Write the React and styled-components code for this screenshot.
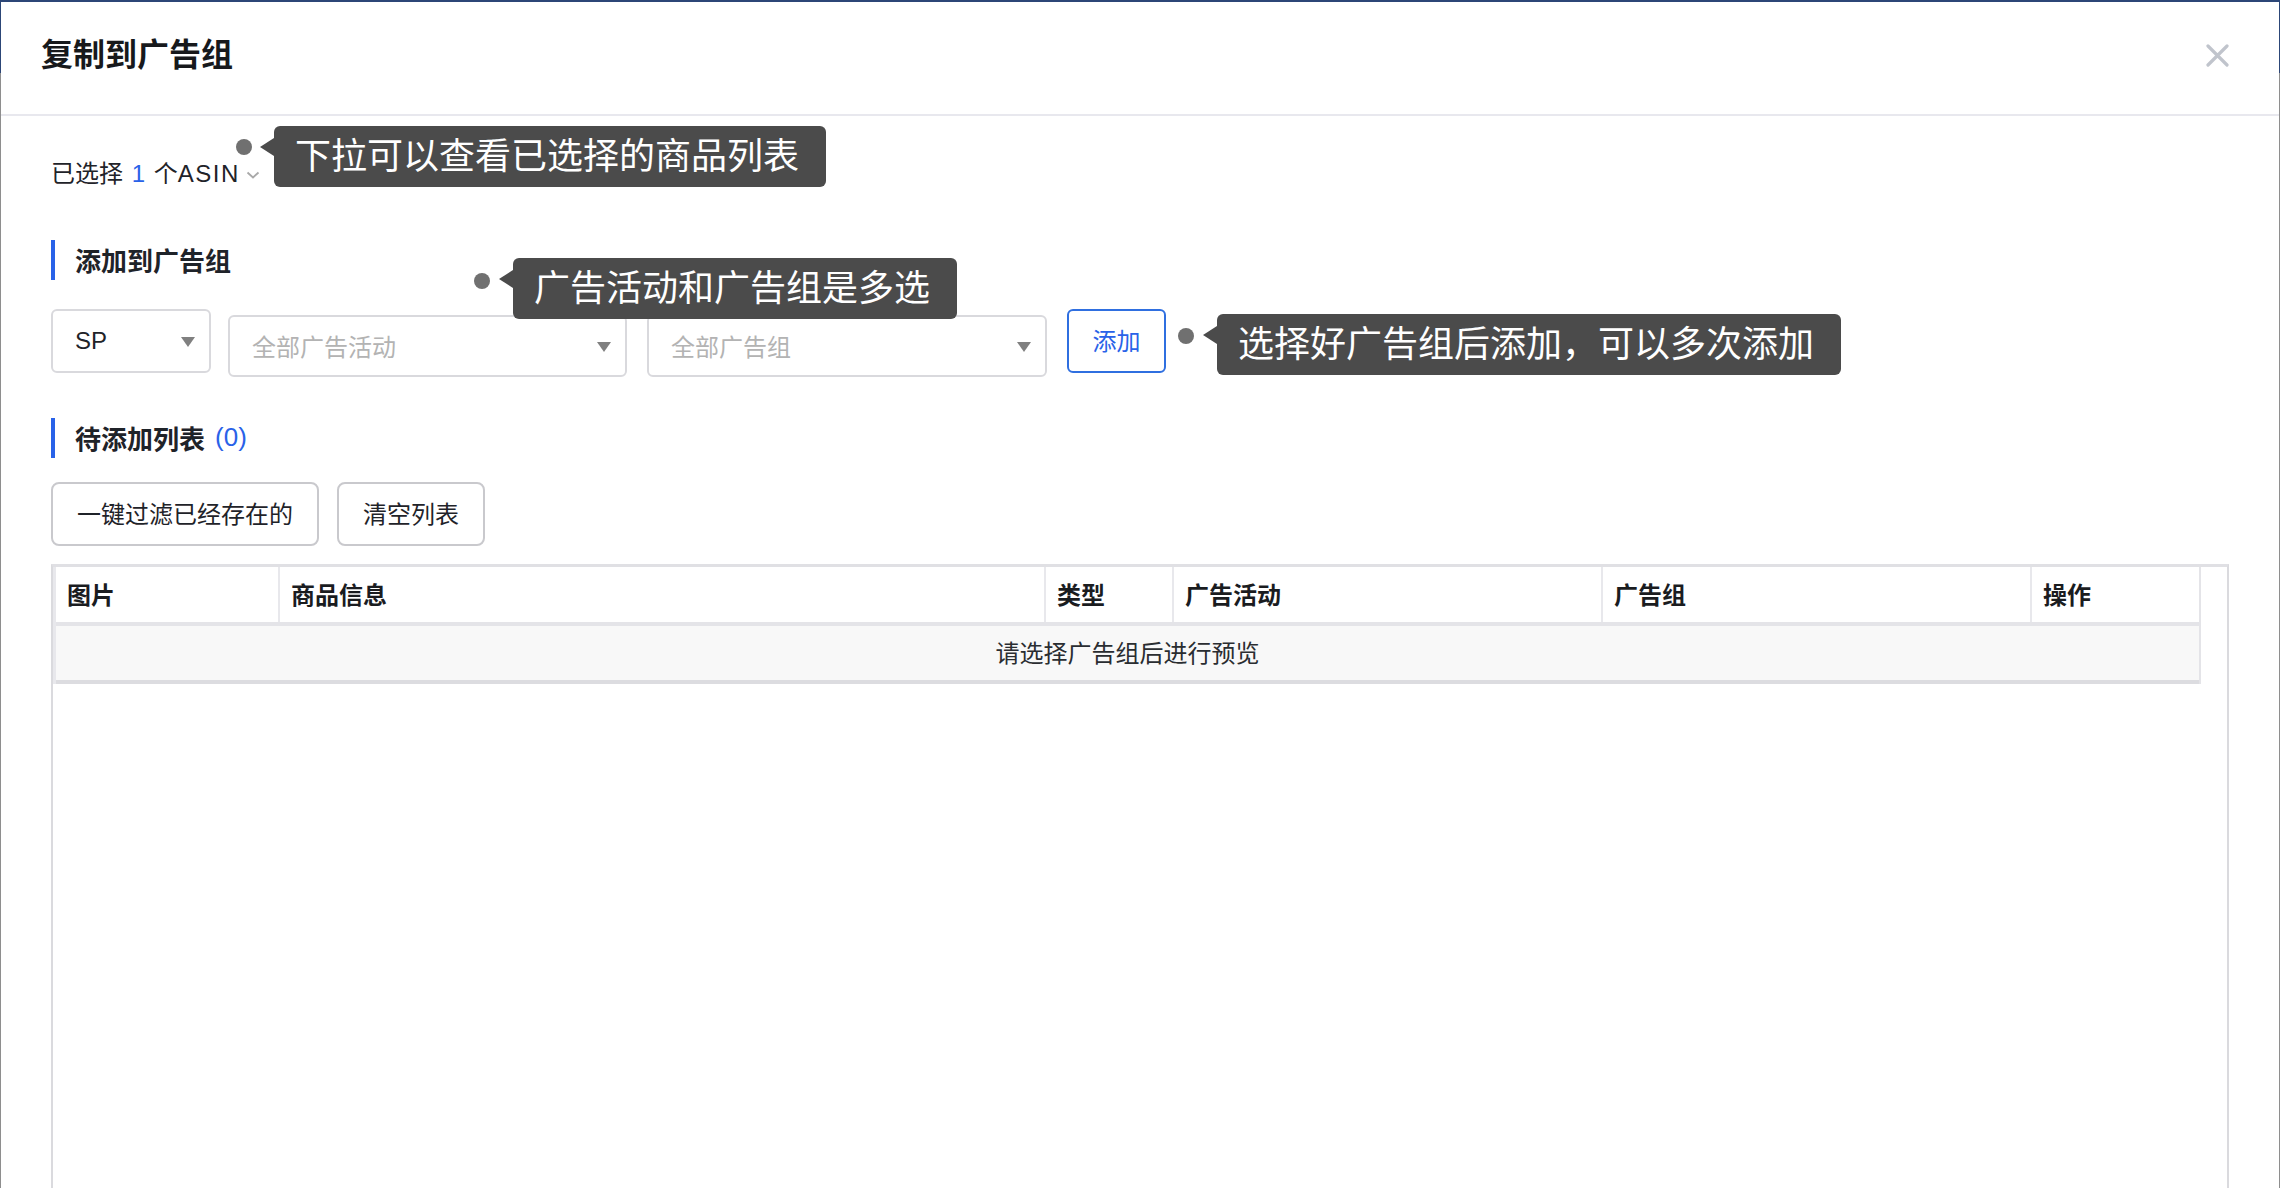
import React from "react";
import styled, { createGlobalStyle } from "styled-components";

const GlobalStyle = createGlobalStyle`
  html, body { margin: 0; padding: 0; }
  body {
    font-family: "Liberation Sans", "Noto Sans CJK SC", "Noto Sans", sans-serif;
    background: #ffffff;
    color: #1f2329;
  }
  * { box-sizing: border-box; }
`;

const BLUE = "#2962e8";

const Page = styled.div`
  width: 2280px;
  height: 1188px;
  overflow: hidden;
  padding: 2px 1px 0 1px;
  background: linear-gradient(to bottom, #2c4677 0, #2c4677 73px, #8e8e8e 73px);
`;

const Dialog = styled.div`
  position: relative;
  width: 100%;
  height: 1186px;
  background: #ffffff;
  overflow: hidden;
`;

const Header = styled.div`
  height: 114px;
  display: flex;
  align-items: center;
  justify-content: space-between;
  padding: 0 50px 6px 40px;
  border-bottom: 2px solid #e8e8ee;
`;

const Title = styled.h1`
  margin: 0;
  font-size: 32px;
  font-weight: 700;
  color: #17191c;
  line-height: 40px;
`;

const CloseButton = styled.button`
  width: 24px;
  height: 24px;
  padding: 0;
  border: none;
  background: transparent;
  display: flex;
  align-items: center;
  justify-content: center;
  cursor: pointer;
`;

const Body = styled.div`
  padding: 41px 50px 0 50px;
`;

const SelectedRow = styled.div`
  display: flex;
  align-items: center;
  height: 34px;
  font-size: 24px;
  line-height: 34px;
  color: #1f2329;
  white-space: pre;
`;

const BlueNum = styled.span`
  color: ${BLUE};
  margin: 0 2px;
`;

const Latin = styled.span`
  letter-spacing: 1.5px;
`;

const Chevron = styled.span`
  display: inline-flex;
  margin-left: 6px;
  margin-top: 2px;
`;

const SectionTitle = styled.div`
  display: flex;
  align-items: center;
  height: 40px;
  margin-top: ${(p) => p.$top}px;
  border-left: 4px solid ${BLUE};
  padding-left: 20px;
  padding-bottom: 2px;
  font-size: 26px;
  font-weight: 700;
  color: #1f2329;
`;

const Count = styled.span`
  margin-left: 10px;
  font-weight: 400;
  color: ${BLUE};
`;

const FilterRow = styled.div`
  display: flex;
  align-items: flex-start;
  margin-top: 29px;
  height: 68px;
`;

const Select = styled.div`
  display: flex;
  align-items: center;
  justify-content: space-between;
  width: ${(p) => p.$w}px;
  height: ${(p) => p.$h}px;
  margin-top: ${(p) => p.$top || 0}px;
  margin-right: ${(p) => p.$gap}px;
  padding: 0 14px 1px 22px;
  border: 2px solid #d9d9dd;
  border-radius: 6px;
  background: #fff;
  font-size: 24px;
  color: ${(p) => (p.$placeholder ? "#b3b3b3" : "#1f2329")};
`;

const Caret = styled.span`
  width: 0;
  height: 0;
  margin-top: 2px;
  border-left: 7px solid transparent;
  border-right: 7px solid transparent;
  border-top: 10px solid #808080;
`;

const PrimaryOutline = styled.button`
  width: 99px;
  height: 64px;
  border: 2px solid #2f6fe0;
  border-radius: 6px;
  background: #fff;
  color: ${BLUE};
  font-family: inherit;
  font-size: 24px;
  padding: 0 0 3px;
  cursor: pointer;
`;

const ButtonRow = styled.div`
  display: flex;
  gap: 18px;
  margin-top: 24px;
`;

const PlainButton = styled.button`
  height: 64px;
  padding: 0 24px 3px;
  border: 2px solid #c9c9cd;
  border-radius: 8px;
  background: #fff;
  color: #1f2329;
  font-family: inherit;
  font-size: 24px;
  cursor: pointer;
`;

const TableFrame = styled.div`
  margin-top: 18px;
  height: 700px;
  border-left: 2px solid #dadade;
  border-right: 2px solid #dadade;
  border-top: 3px solid #e0e0e4;
  padding-right: 26px;
`;

const Table = styled.div`
  border-left: 3px solid #e8e8ec;
  border-right: 2px solid #e4e4e8;
`;

const HeaderRow = styled.div`
  display: grid;
  grid-template-columns: 222px 766px 128px 429px 429px 1fr;
  height: 59px;
  border-bottom: 4px solid #e4e4e8;
  background: #fff;
`;

const HeadCell = styled.div`
  display: flex;
  align-items: center;
  padding: 0 0 2px 11px;
  border-left: ${(p) => (p.$first ? "none" : "2px solid #e8e8ec")};
  font-size: 24px;
  font-weight: 700;
  color: #1a1c1f;
`;

const EmptyRow = styled.div`
  display: flex;
  align-items: center;
  justify-content: center;
  height: 58px;
  padding-bottom: 4px;
  background: #f8f8f8;
  border-bottom: 4px solid #dcdce0;
  font-size: 24px;
  color: #2a2d31;
`;

const Dot = styled.span`
  position: absolute;
  left: ${(p) => p.$x - 8}px;
  top: ${(p) => p.$y - 10}px;
  width: 16px;
  height: 16px;
  border-radius: 50%;
  background: #707070;
`;

const Tip = styled.div`
  position: absolute;
  left: ${(p) => p.$x}px;
  top: ${(p) => p.$y}px;
  height: 61px;
  padding: 0 27px 0 21px;
  border-radius: 6px;
  background: #4b4b4b;
  color: #ffffff;
  font-size: 36px;
  line-height: 61px;
  white-space: nowrap;
  &::before {
    content: "";
    position: absolute;
    left: -14px;
    top: 12px;
    border-top: 9px solid transparent;
    border-bottom: 9px solid transparent;
    border-right: 14px solid #4b4b4b;
  }
`;

const columns = ["图片", "商品信息", "类型", "广告活动", "广告组", "操作"];

export default function App() {
  return (
    <>
      <GlobalStyle />
      <Page>
        <Dialog>
          <Header>
            <Title>复制到广告组</Title>
            <CloseButton aria-label="关闭">
              <svg width="23" height="23" viewBox="0 0 23 23">
                <path d="M2 2 L21 21 M21 2 L2 21" stroke="#c0c4cc" strokeWidth="3.2" strokeLinecap="round" />
              </svg>
            </CloseButton>
          </Header>
          <Body>
            <SelectedRow>
              已选择 <BlueNum>1</BlueNum> 个<Latin>ASIN</Latin>
              <Chevron>
                <svg width="14" height="8" viewBox="0 0 14 8">
                  <path d="M1.5 1.5 L7 6.5 L12.5 1.5" fill="none" stroke="#a9a9a9" strokeWidth="1.8" />
                </svg>
              </Chevron>
            </SelectedRow>

            <SectionTitle $top={49}>添加到广告组</SectionTitle>
            <FilterRow>
              <Select $w={160} $h={64} $gap={17}>
                SP
                <Caret />
              </Select>
              <Select $w={399} $h={62} $top={6} $gap={20} $placeholder>
                全部广告活动
                <Caret />
              </Select>
              <Select $w={400} $h={62} $top={6} $gap={20} $placeholder>
                全部广告组
                <Caret />
              </Select>
              <PrimaryOutline>添加</PrimaryOutline>
            </FilterRow>

            <SectionTitle $top={41}>
              待添加列表<Count>(0)</Count>
            </SectionTitle>
            <ButtonRow>
              <PlainButton>一键过滤已经存在的</PlainButton>
              <PlainButton>清空列表</PlainButton>
            </ButtonRow>

            <TableFrame>
              <Table>
                <HeaderRow>
                  {columns.map((c, i) => (
                    <HeadCell key={c} $first={i === 0}>
                      {c}
                    </HeadCell>
                  ))}
                </HeaderRow>
                <EmptyRow>请选择广告组后进行预览</EmptyRow>
              </Table>
            </TableFrame>
          </Body>

          <Dot $x={243} $y={147} />
          <Tip $x={273} $y={124}>下拉可以查看已选择的商品列表</Tip>
          <Dot $x={481} $y={281} />
          <Tip $x={512} $y={256}>广告活动和广告组是多选</Tip>
          <Dot $x={1185} $y={336} />
          <Tip $x={1216} $y={312}>选择好广告组后添加，可以多次添加</Tip>
        </Dialog>
      </Page>
    </>
  );
}
